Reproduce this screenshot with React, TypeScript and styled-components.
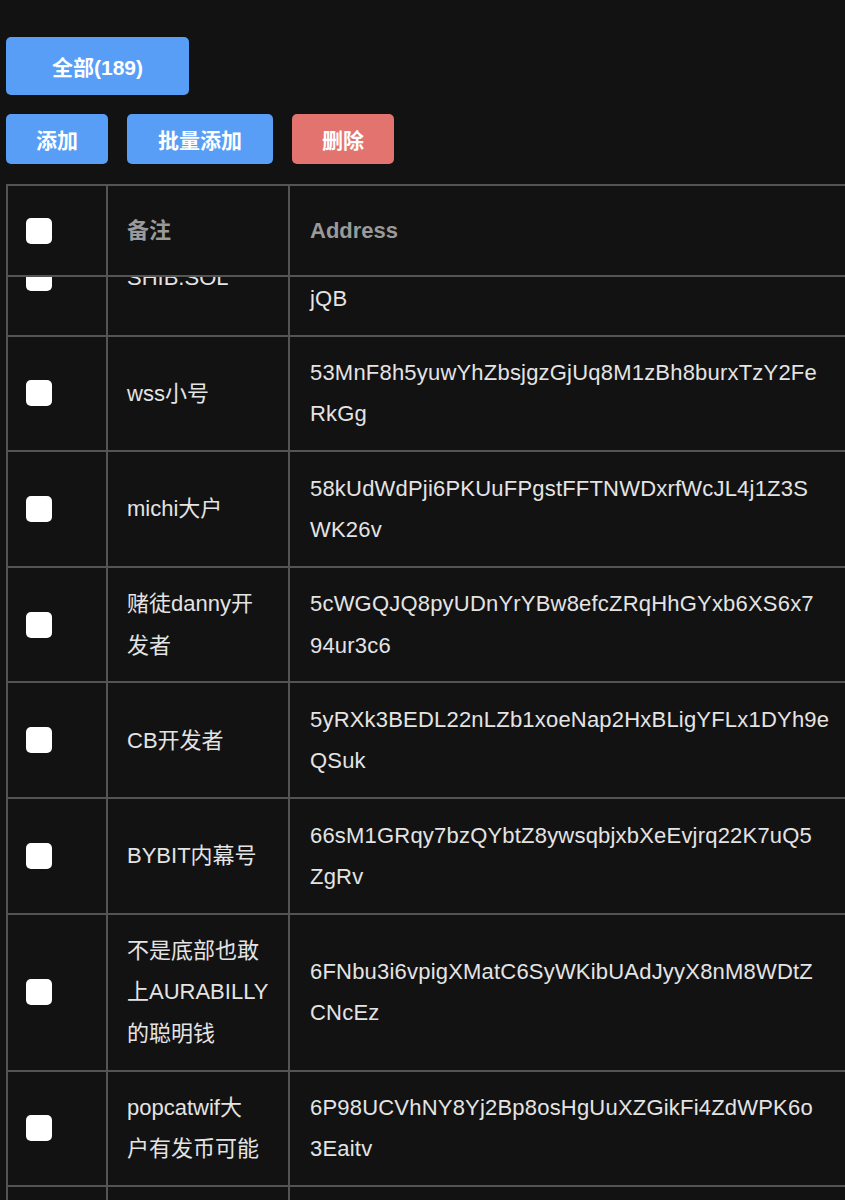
import { useLayoutEffect, useRef } from "react";
import styled, { createGlobalStyle } from "styled-components";

const GlobalStyle = createGlobalStyle`
    html, body {
        margin: 0;
        padding: 0;
        background: #121212;
    }

    body {
        font-family: "Liberation Sans", "Noto Sans CJK SC", sans-serif;
        color: #e4e4e4;
        overflow: hidden;
    }
`;

type Wallet = {
    id: number;
    remark: string;
    address: string;
    // where the address wraps inside the cell
    wrapAt: number;
};

const wallets: Wallet[] = [
    { id: 1, remark: "SHIB.SOL", address: "4sPQ8wZ9mFhXcJvT7nLrGk2YbDu5eA1qHiNoWzE3tKjQB", wrapAt: 42 },
    { id: 2, remark: "wss小号", address: "53MnF8h5yuwYhZbsjgzGjUq8M1zBh8burxTzY2FeRkGg", wrapAt: 40 },
    { id: 3, remark: "michi大户", address: "58kUdWdPji6PKUuFPgstFFTNWDxrfWcJL4j1Z3SWK26v", wrapAt: 39 },
    { id: 4, remark: "赌徒danny开\n发者", address: "5cWGQJQ8pyUDnYrYBw8efcZRqHhGYxb6XS6x794ur3c6", wrapAt: 37 },
    { id: 5, remark: "CB开发者", address: "5yRXk3BEDL22nLZb1xoeNap2HxBLigYFLx1DYh9eQSuk", wrapAt: 40 },
    { id: 6, remark: "BYBIT内幕号", address: "66sM1GRqy7bzQYbtZ8ywsqbjxbXeEvjrq22K7uQ5ZgRv", wrapAt: 40 },
    { id: 7, remark: "不是底部也敢\n上AURABILLY\n的聪明钱", address: "6FNbu3i6vpigXMatC6SyWKibUAdJyyX8nM8WDtZCNcEz", wrapAt: 39 },
    { id: 8, remark: "popcatwif大\n户有发币可能", address: "6P98UCVhNY8Yj2Bp8osHgUuXZGikFi4ZdWPK6o3Eaitv", wrapAt: 38 },
    { id: 9, remark: "pnut早期买家", address: "6rT4kLm2XqzB8vNcW9sYdHf3JpGa5EuQo7iRbKy1ZwVx", wrapAt: 40 },
];

export default function App() {
    const scrollRef = useRef<HTMLDivElement>(null);

    useLayoutEffect(() => {
        if (scrollRef.current) {
            scrollRef.current.scrollTop = 56;
        }
    }, []);

    return <Page>
        <GlobalStyle />
        <FilterRow>
            <Button $variant="primary" $width={183} $height={58}>全部(189)</Button>
        </FilterRow>
        <Toolbar>
            <Button $variant="primary" $width={102}>添加</Button>
            <Button $variant="primary" $width={146}>批量添加</Button>
            <Button $variant="danger" $width={102}>删除</Button>
        </Toolbar>
        <TableScroller ref={scrollRef}>
            <Table>
                <thead>
                    <tr>
                        <th className="check"><Checkbox type="checkbox" /></th>
                        <th className="remark">备注</th>
                        <th className="address">Address</th>
                    </tr>
                </thead>
                <tbody>
                    {wallets.map((w) => <tr key={w.id}>
                        <td className="check"><Checkbox type="checkbox" /></td>
                        <td className="remark">{w.remark}</td>
                        <td className="address">
                            <AddressLine>{w.address.slice(0, w.wrapAt)}</AddressLine>
                            <AddressLine>{w.address.slice(w.wrapAt)}</AddressLine>
                        </td>
                    </tr>)}
                </tbody>
            </Table>
        </TableScroller>
    </Page>
}

const Page = styled.div`
    padding: 37px 0 0 6px;
    height: 100vh;
    box-sizing: border-box;
    display: flex;
    flex-direction: column;
`;

const FilterRow = styled.div`
    display: flex;
    margin-bottom: 19px;
`;

const Toolbar = styled.div`
    display: flex;
    gap: 19px;
    margin-bottom: 20px;
`;

const Button = styled.button<{ $variant: "primary" | "danger"; $width: number; $height?: number }>`
    font-family: "Liberation Sans", "Noto Sans CJK SC", sans-serif;
    font-size: 21px;
    font-weight: 700;
    color: #ffffff;
    border: none;
    border-radius: 5px;
    cursor: pointer;
    padding: 0;
    background: ${(p) => (p.$variant === "danger" ? "#e3736f" : "#589ef7")};
    width: ${(p) => p.$width}px;
    height: ${(p) => p.$height ?? 50}px;
`;

const TableScroller = styled.div`
    flex: 1;
    overflow: hidden;
`;

const Table = styled.table`
    width: 900px;
    border-collapse: separate;
    border-spacing: 0;
    table-layout: fixed;
    font-size: 22px;
    line-height: 41.3px;

    th, td {
        box-sizing: border-box;
        border-right: 2px solid #545454;
        border-bottom: 2px solid #545454;
        padding: 15.5px 18px 15.5px 20px;
        text-align: left;
        vertical-align: middle;
    }

    th {
        position: sticky;
        top: 0;
        z-index: 1;
        background: #121212;
        border-top: 2px solid #545454;
        padding-top: 23.9px;
        padding-bottom: 23.9px;
        color: #9a9a9a;
        font-weight: 700;
    }

    td {
        color: #e4e4e4;
        background: #121212;
    }

    .check {
        width: 102px;
        padding-left: 18px;
        border-left: 2px solid #545454;
    }

    .remark {
        width: 182px;
        padding-left: 19px;
        white-space: pre;
    }
`;

const AddressLine = styled.div`
    white-space: nowrap;
    letter-spacing: 0.2px;
`;

const Checkbox = styled.input`
    appearance: none;
    display: block;
    margin: 0;
    width: 26px;
    height: 26px;
    border-radius: 5px;
    background: #ffffff;
    border: none;
    cursor: pointer;
`;
